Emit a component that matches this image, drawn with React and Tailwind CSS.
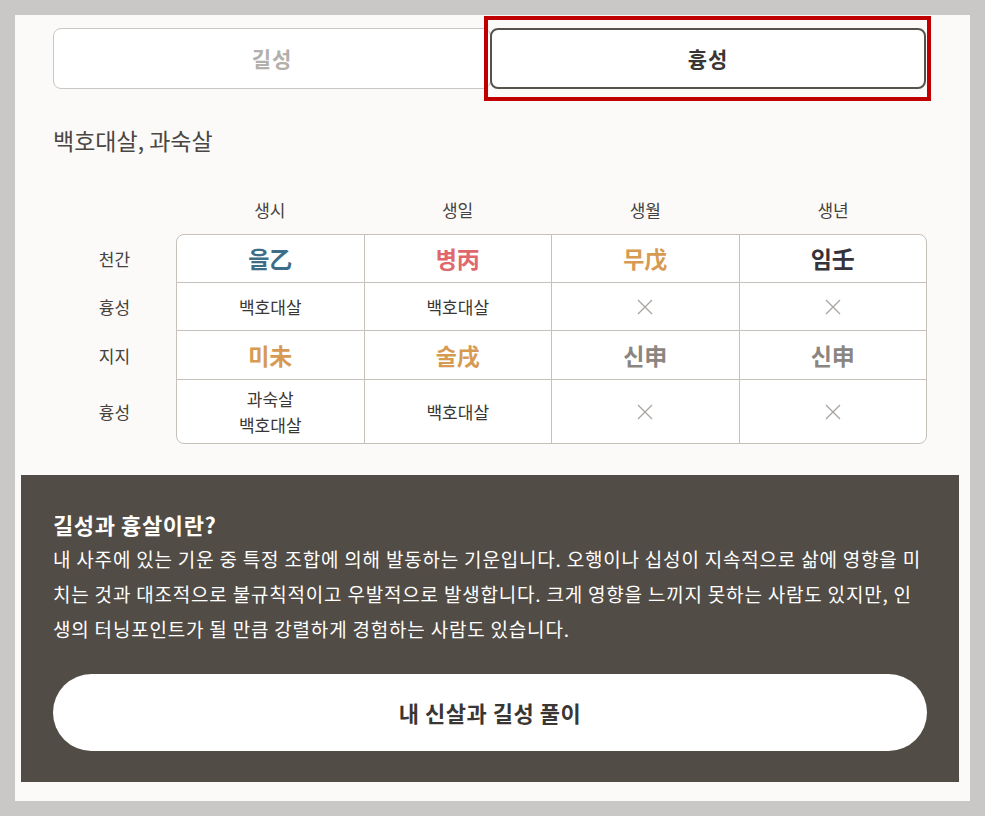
import React from 'react';

const cols = ['생시', '생일', '생월', '생년'];

const rows = [
  {
    label: '천간',
    h: 'h-[48px]',
    cells: [
      { t: '을乙', c: 'text-[#3e6d88]' },
      { t: '병丙', c: 'text-[#e0676b]' },
      { t: '무戊', c: 'text-[#d79a52]' },
      { t: '임壬', c: 'text-[#34323a]' },
    ],
    big: true,
  },
  { label: '흉성', h: 'h-[48px]', cells: [{ t: '백호대살' }, { t: '백호대살' }, { x: true }, { x: true }] },
  {
    label: '지지',
    h: 'h-[49px]',
    cells: [
      { t: '미未', c: 'text-[#d79a52]' },
      { t: '술戌', c: 'text-[#d79a52]' },
      { t: '신申', c: 'text-[#8a8580]' },
      { t: '신申', c: 'text-[#8a8580]' },
    ],
    big: true,
  },
  { label: '흉성', h: 'h-[63px]', cells: [{ t: '과숙살\n백호대살' }, { t: '백호대살' }, { x: true }, { x: true }] },
];

const Cross = () => (
  <svg width="18" height="18" viewBox="0 0 18 18" className="text-[#a9a4a0]">
    <path d="M2 2 L16 16 M16 2 L2 16" stroke="currentColor" strokeWidth="1.3" fill="none" />
  </svg>
);

export default function App() {
  return (
    <div
      className="min-h-screen bg-[#c9c8c6] p-[15px]"
      style={{ fontFamily: '"Noto Sans CJK KR", "Noto Sans", sans-serif' }}
    >
      <div className="relative bg-[#fbfaf8] h-[786px] pt-[13px]">
        {/* annotation box */}
        <div className="absolute left-[469px] top-[1px] w-[447px] h-[85px] border-4 border-[#c00000]" />

        <div className="ml-[38px] w-[873px] flex">
          <button className="w-[438px] h-[61px] rounded-lg border border-[#cbc7c3] bg-white text-[21px] tracking-[1px] font-bold text-[#b3afab]">
            길성
          </button>
          <button className="w-[436px] -ml-px h-[61px] rounded-lg border-2 border-[#58524d] bg-white text-[21px] tracking-[1px] font-bold text-[#3a3633]">
            흉성
          </button>
        </div>

        <p className="ml-[38px] mt-[36px] text-[23px] leading-[30px] text-[#4a4643]">백호대살, 과숙살</p>

        <div className="ml-[38px] w-[874px] mt-[38px]">
          <div className="flex h-[34px] items-center">
            <div className="w-[123px]" />
            {cols.map((c) => (
              <div key={c} className="flex-1 text-center text-[17px] text-[#45413e]">
                {c}
              </div>
            ))}
          </div>
          <div className="flex mt-[7px]">
            <div className="w-[123px] flex flex-col pt-px">
              {rows.map((r, i) => (
                <div key={i} className={`${r.h} flex items-center justify-center text-[17px] text-[#45413e]`}>
                  {r.label}
                </div>
              ))}
            </div>
            <div className="flex-1 bg-white border border-[#c7c1bc] rounded-lg overflow-hidden">
              {rows.map((r, i) => (
                <div
                  key={i}
                  className={`flex ${r.h} ${i < rows.length - 1 ? 'border-b border-[#c7c1bc]' : ''}`}
                >
                  {r.cells.map((cell, j) => (
                    <div
                      key={j}
                      className={`flex-1 flex items-center justify-center text-center ${j < 3 ? 'border-r border-[#c7c1bc]' : ''}`}
                    >
                      {cell.x ? (
                        <Cross />
                      ) : r.big ? (
                        <span className={`text-[23px] font-bold ${cell.c}`}>{cell.t}</span>
                      ) : (
                        <span className="text-[17px] leading-[26px] text-[#3a3633] whitespace-pre-line">{cell.t}</span>
                      )}
                    </div>
                  ))}
                </div>
              ))}
            </div>
          </div>
        </div>

        <div className="ml-[6px] w-[938px] mt-[31px] bg-[#524c46] px-[32px] pt-[34px] pb-[31px]">
          <h3 className="text-[22px] tracking-[0.6px] leading-[30px] font-bold text-white">길성과 흉살이란?</h3>
          <p className="mt-[2px] text-[19px] tracking-[0.8px] leading-[35px] text-white whitespace-nowrap">
            내 사주에 있는 기운 중 특정 조합에 의해 발동하는 기운입니다. 오행이나 십성이 지속적으로 삶에 영향을 미
            <br />
            치는 것과 대조적으로 불규칙적이고 우발적으로 발생합니다. 크게 영향을 느끼지 못하는 사람도 있지만, 인
            <br />
            생의 터닝포인트가 될 만큼 강렬하게 경험하는 사람도 있습니다.
          </p>
          <button className="mt-[28px] w-full h-[77px] rounded-full bg-white text-[22px] tracking-[0.5px] font-bold text-[#3a3633]">
            내 신살과 길성 풀이
          </button>
        </div>
      </div>
    </div>
  );
}
